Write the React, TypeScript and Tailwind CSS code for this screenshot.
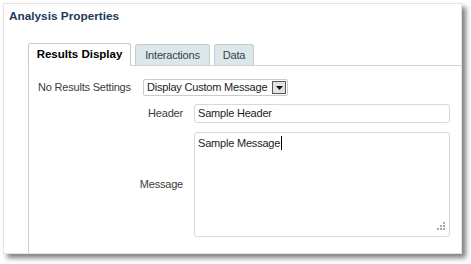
import React from "react";

export default function App() {
  const font = { fontFamily: '"Liberation Sans", Arial, sans-serif' };
  return (
    <div className="w-[471px] h-[264px] bg-white overflow-hidden" style={font}>
      <div className="ml-[3px] mt-[3px] w-[459px] h-[251px] bg-white border border-[#e4e4e4] shadow-[4px_4px_5px_rgba(0,0,0,0.5)] flex flex-col">
        <div className="pl-[5px] pt-[4px] h-[38px] text-[11.8px] font-bold text-[#1d3a5a] leading-[16px]">
          Analysis Properties
        </div>
        <div className="ml-[24px] flex-1 flex flex-col">
          <div className="flex items-end gap-[4px] h-[23px]">
            <div className="w-[103px] h-[23px] bg-white border border-[#c3ccd0] border-b-0 rounded-t-[3px] flex items-center justify-center text-[11.5px] font-bold text-black -mb-px relative z-10">
              Results Display
            </div>
            <div className="w-[75px] h-[21px] bg-[#dde6e9] border border-[#c3ccd0] border-b-0 rounded-t-[3px] flex items-center justify-center text-[11px] tracking-[-0.2px] text-[#34434e]">
              Interactions
            </div>
            <div className="w-[40px] h-[21px] bg-[#dde6e9] border border-[#c3ccd0] border-b-0 rounded-t-[3px] flex items-center justify-center text-[11px] tracking-[-0.2px] text-[#34434e]">
              Data
            </div>
          </div>
          <div className="flex-1 border-t border-l border-[#cbd3d6] pt-[13px] pl-[9px] text-[11px] tracking-[-0.2px] text-[#3b3b3b]">
            <div className="flex items-center h-[17px]">
              <div className="w-[105px] whitespace-nowrap">No Results Settings</div>
              <div className="w-[145px] h-[17px] border border-[#c5cdd0] rounded-[2px] flex items-center justify-between pl-[3px] pr-[1px] text-[#222]">
                <span className="whitespace-nowrap">Display Custom Message</span>
                <span className="w-[14px] h-[13px] bg-[#e3e3e3] border border-[#555] flex items-center justify-center shrink-0">
                  <svg width="7" height="4" viewBox="0 0 7 4">
                    <path d="M0 0H7L3.5 4Z" fill="#111" />
                  </svg>
                </span>
              </div>
            </div>
            <div className="flex items-center mt-[8px]">
              <div className="w-[145px] text-right">Header</div>
              <div className="ml-[11px] w-[256px] h-[19px] border border-[#d3dadd] rounded-[3px] flex items-center pl-[3px] text-[#222]">
                Sample Header
              </div>
            </div>
            <div className="flex items-center mt-[9px]">
              <div className="w-[145px] text-right">Message</div>
              <div className="ml-[11px] w-[256px] h-[105px] border border-[#d3dadd] rounded-[3px] relative pl-[3px] pt-[2px] text-[#222]">
                <span>Sample Message</span>
                <span className="inline-block w-px h-[14px] bg-black align-middle ml-px -mt-[2px]" />
                <svg className="absolute right-[3px] bottom-[3px]" width="11" height="11" viewBox="0 0 11 11">
                  <g fill="#a8a8a8">
                    <rect x="8" y="0" width="2" height="2" />
                    <rect x="5" y="3" width="2" height="2" />
                    <rect x="8" y="3" width="2" height="2" />
                    <rect x="2" y="6" width="2" height="2" />
                    <rect x="5" y="6" width="2" height="2" />
                    <rect x="8" y="6" width="2" height="2" />
                  </g>
                </svg>
              </div>
            </div>
          </div>
        </div>
      </div>
    </div>
  );
}
